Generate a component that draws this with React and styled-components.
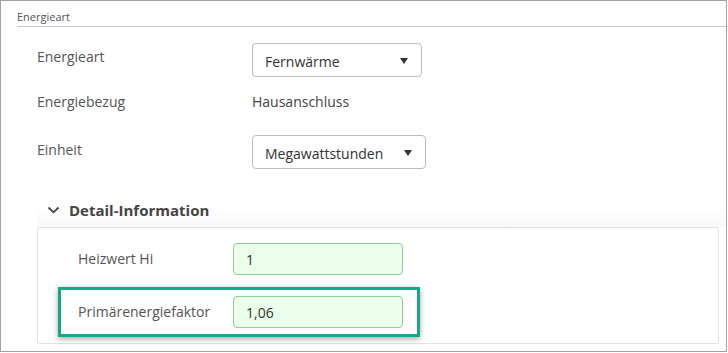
import React from 'react'
import styled, { createGlobalStyle } from 'styled-components'

const GlobalStyle = createGlobalStyle`
  body {
    margin: 0;
    background: #fff;
    font-family: "Open Sans", "Liberation Sans", sans-serif;
  }
`

const Frame = styled.div`
  box-sizing: border-box;
  width: 727px;
  height: 352px;
  border: 1px solid #a3a3a3;
  background: #fff;
  overflow: hidden;
`

const Legend = styled.div`
  margin-left: 16px;
  padding-top: 9px;
  height: 16px;
  line-height: 14px;
  font-size: 11px;
  color: #555;
  border-bottom: 1px solid #c8c8c8;
`

const Content = styled.div`
  padding: 16px 0 0 36px;
`

const Row = styled.div`
  display: flex;
  align-items: flex-start;
  height: ${props => props.height || 34}px;
  margin-bottom: ${props => props.gap ?? 11}px;
`

const Label = styled.div`
  width: ${props => props.width || 215}px;
  padding-top: ${props => props.top ?? 4}px;
  line-height: 20px;
  font-size: 14px;
  color: #555;
`

const Value = styled.div`
  padding-top: 4px;
  line-height: 20px;
  font-size: 14px;
  color: #444;
`

const Select = styled.div`
  box-sizing: border-box;
  width: ${props => props.width}px;
  height: 34px;
  display: flex;
  align-items: center;
  justify-content: space-between;
  padding: 2px 13px 0 12px;
  border: 1px solid #bdbdbd;
  border-radius: 4px;
  font-size: 14px;
  color: #333;
`

const Caret = styled.span`
  width: 0;
  height: 0;
  border-left: 4px solid transparent;
  border-right: 4px solid transparent;
  border-top: 6px solid #333;
`

const DetailHeader = styled.div`
  display: flex;
  align-items: center;
  gap: 9px;
  height: 31px;
  margin-top: 25px;
  padding: 0 0 2px 10px;
  font-size: 15px;
  font-weight: 700;
  color: #444;
  background: linear-gradient(#fff 40%, #f8f8f8);
`

const Panel = styled.div`
  box-sizing: border-box;
  width: 682px;
  height: 117px;
  border: 1px solid #e2e2e2;
  border-radius: 2px;
  background: #fff;
  padding: 6px 0 0 20px;
`

const FieldRow = styled.div`
  box-sizing: border-box;
  display: flex;
  align-items: flex-start;
  width: 362px;
  height: 50px;
  margin-bottom: 3px;
  padding: 6px 0 0 17px;
  border: 3px solid ${props => (props.highlight ? '#13a98a' : 'transparent')};
  box-shadow: ${props => (props.highlight ? '0 2px 6px rgba(0, 0, 0, 0.35)' : 'none')};
`

const Input = styled.div`
  box-sizing: border-box;
  width: 170px;
  height: 32px;
  display: flex;
  align-items: center;
  padding: 1px 0 0 12px;
  border: 1px solid #8fd08f;
  border-radius: 4px;
  background: #ebfdeb;
  font-size: 14px;
  color: #333;
`

function Chevron() {
  return (
    <svg width="13" height="8" viewBox="0 0 13 8">
      <path d="M1.5 1.5 L6.5 6.3 L11.5 1.5" fill="none" stroke="#444" strokeWidth="1.8" />
    </svg>
  )
}

export default function App() {
  return (
    <>
      <GlobalStyle />
      <Frame>
        <Legend>Energieart</Legend>
        <Content>
          <Row>
            <Label>Energieart</Label>
            <Select width={170}>
              Fernwärme
              <Caret />
            </Select>
          </Row>
          <Row height={36}>
            <Label>Energiebezug</Label>
            <Value>Hausanschluss</Value>
          </Row>
          <Row gap={0}>
            <Label top={5}>Einheit</Label>
            <Select width={174}>
              Megawattstunden
              <Caret />
            </Select>
          </Row>
          <DetailHeader>
            <Chevron />
            Detail-Information
          </DetailHeader>
          <Panel>
            <FieldRow>
              <Label width={155} top={6}>Heizwert Hi</Label>
              <Input>1</Input>
            </FieldRow>
            <FieldRow highlight>
              <Label width={155} top={6}>Primärenergiefaktor</Label>
              <Input>1,06</Input>
            </FieldRow>
          </Panel>
        </Content>
      </Frame>
    </>
  )
}
